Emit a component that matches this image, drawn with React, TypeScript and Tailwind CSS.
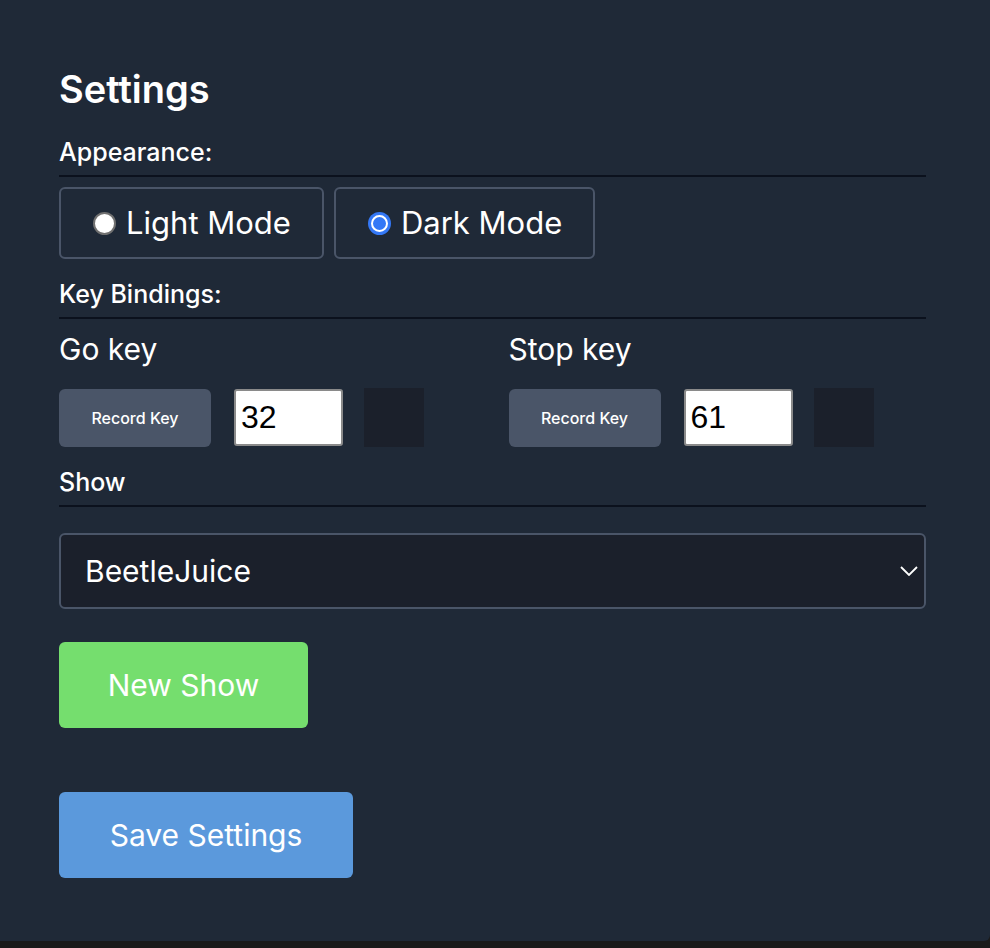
import React from "react";

function Radio({ checked }: { checked: boolean }) {
  if (checked) {
    return (
      <span className="flex h-[23px] w-[23px] items-center justify-center rounded-full bg-[#3478f6] p-[3px]">
        <span className="h-full w-full rounded-full border-[2px] border-white bg-[#3478f6]" />
      </span>
    );
  }
  return <span className="h-[23px] w-[23px] rounded-full border-[2px] border-[#707070] bg-white" />;
}

function Divider() {
  return <div className="h-[2px] w-full bg-[#0b111d]" />;
}

function KeyGroup({ label, value }: { label: string; value: string }) {
  return (
    <div className="flex flex-col">
      <div className="mt-[12px] h-[36px] text-[30px] leading-[36px] text-white">{label}</div>
      <div className="mt-[21px] flex items-center">
        <button className="h-[58px] w-[152px] rounded-[6px] bg-[#4a5568] text-[16px] font-medium text-white">
          Record Key
        </button>
        <input
          readOnly
          value={value}
          className="ml-[23px] h-[57px] w-[109px] rounded-[3px] border-[2px] border-[#8a8a8a] bg-white px-[5px] text-[32px] text-black outline-none [font-family:'Liberation_Sans',Arial,sans-serif]"
        />
        <div className="ml-[21px] h-[59px] w-[60px] bg-[#1b202b]" />
      </div>
    </div>
  );
}

export default function App() {
  return (
    <div className="min-h-[948px] w-full bg-[#1a1a1a] [font-family:Inter,'Noto_Sans',sans-serif]">
      <div className="w-full rounded-br-[6px] bg-[#1f2937] pb-[63px] pl-[59px] pr-[64px] pt-[67px]">
        <h2 className="h-[44px] text-[38px] font-semibold leading-[44px] text-white">Settings</h2>

        <div className="mt-[27px] h-[28px] text-[25px] font-medium leading-[28px] text-white">Appearance:</div>
        <div className="mt-[9px]">
          <Divider />
        </div>
        <div className="mt-[10px] flex gap-[10px]">
          <label className="flex h-[72px] items-center gap-[10px] rounded-[6px] border-[2px] border-[#4a5568] pl-[32px] pr-[31px] text-[31px] text-white">
            <Radio checked={false} />
            <span>Light Mode</span>
          </label>
          <label className="flex h-[72px] items-center gap-[10px] rounded-[6px] border-[2px] border-[#4a5568] pl-[32px] pr-[31px] text-[31px] text-white">
            <Radio checked={true} />
            <span>Dark Mode</span>
          </label>
        </div>

        <div className="mt-[21px] h-[28px] text-[25px] font-medium leading-[28px] text-white">Key Bindings:</div>
        <div className="mt-[9px]">
          <Divider />
        </div>
        <div className="grid grid-cols-2 gap-x-8">
          <KeyGroup label="Go key" value="32" />
          <KeyGroup label="Stop key" value="61" />
        </div>

        <div className="mt-[21px] h-[28px] text-[25px] font-medium leading-[28px] text-white">Show</div>
        <div className="mt-[9px]">
          <Divider />
        </div>
        <div className="mt-[26px] flex h-[76px] items-center justify-between rounded-[6px] border-[2px] border-[#4a5568] bg-[#1b202b] pl-[24px] pr-[6px]">
          <span className="text-[30px] text-white">BeetleJuice</span>
          <svg width="18" height="10" viewBox="0 0 18 10" fill="none">
            <polyline points="1,1 9,9 17,1" stroke="white" strokeWidth="1.8" />
          </svg>
        </div>

        <button className="mt-[33px] flex h-[86px] w-[249px] items-center justify-center rounded-[6px] bg-[#75de6e] text-[30px] text-white">
          New Show
        </button>
        <button className="mt-[64px] flex h-[86px] w-[294px] items-center justify-center rounded-[6px] bg-[#5b99dc] text-[30px] text-white">
          Save Settings
        </button>
      </div>
    </div>
  );
}
